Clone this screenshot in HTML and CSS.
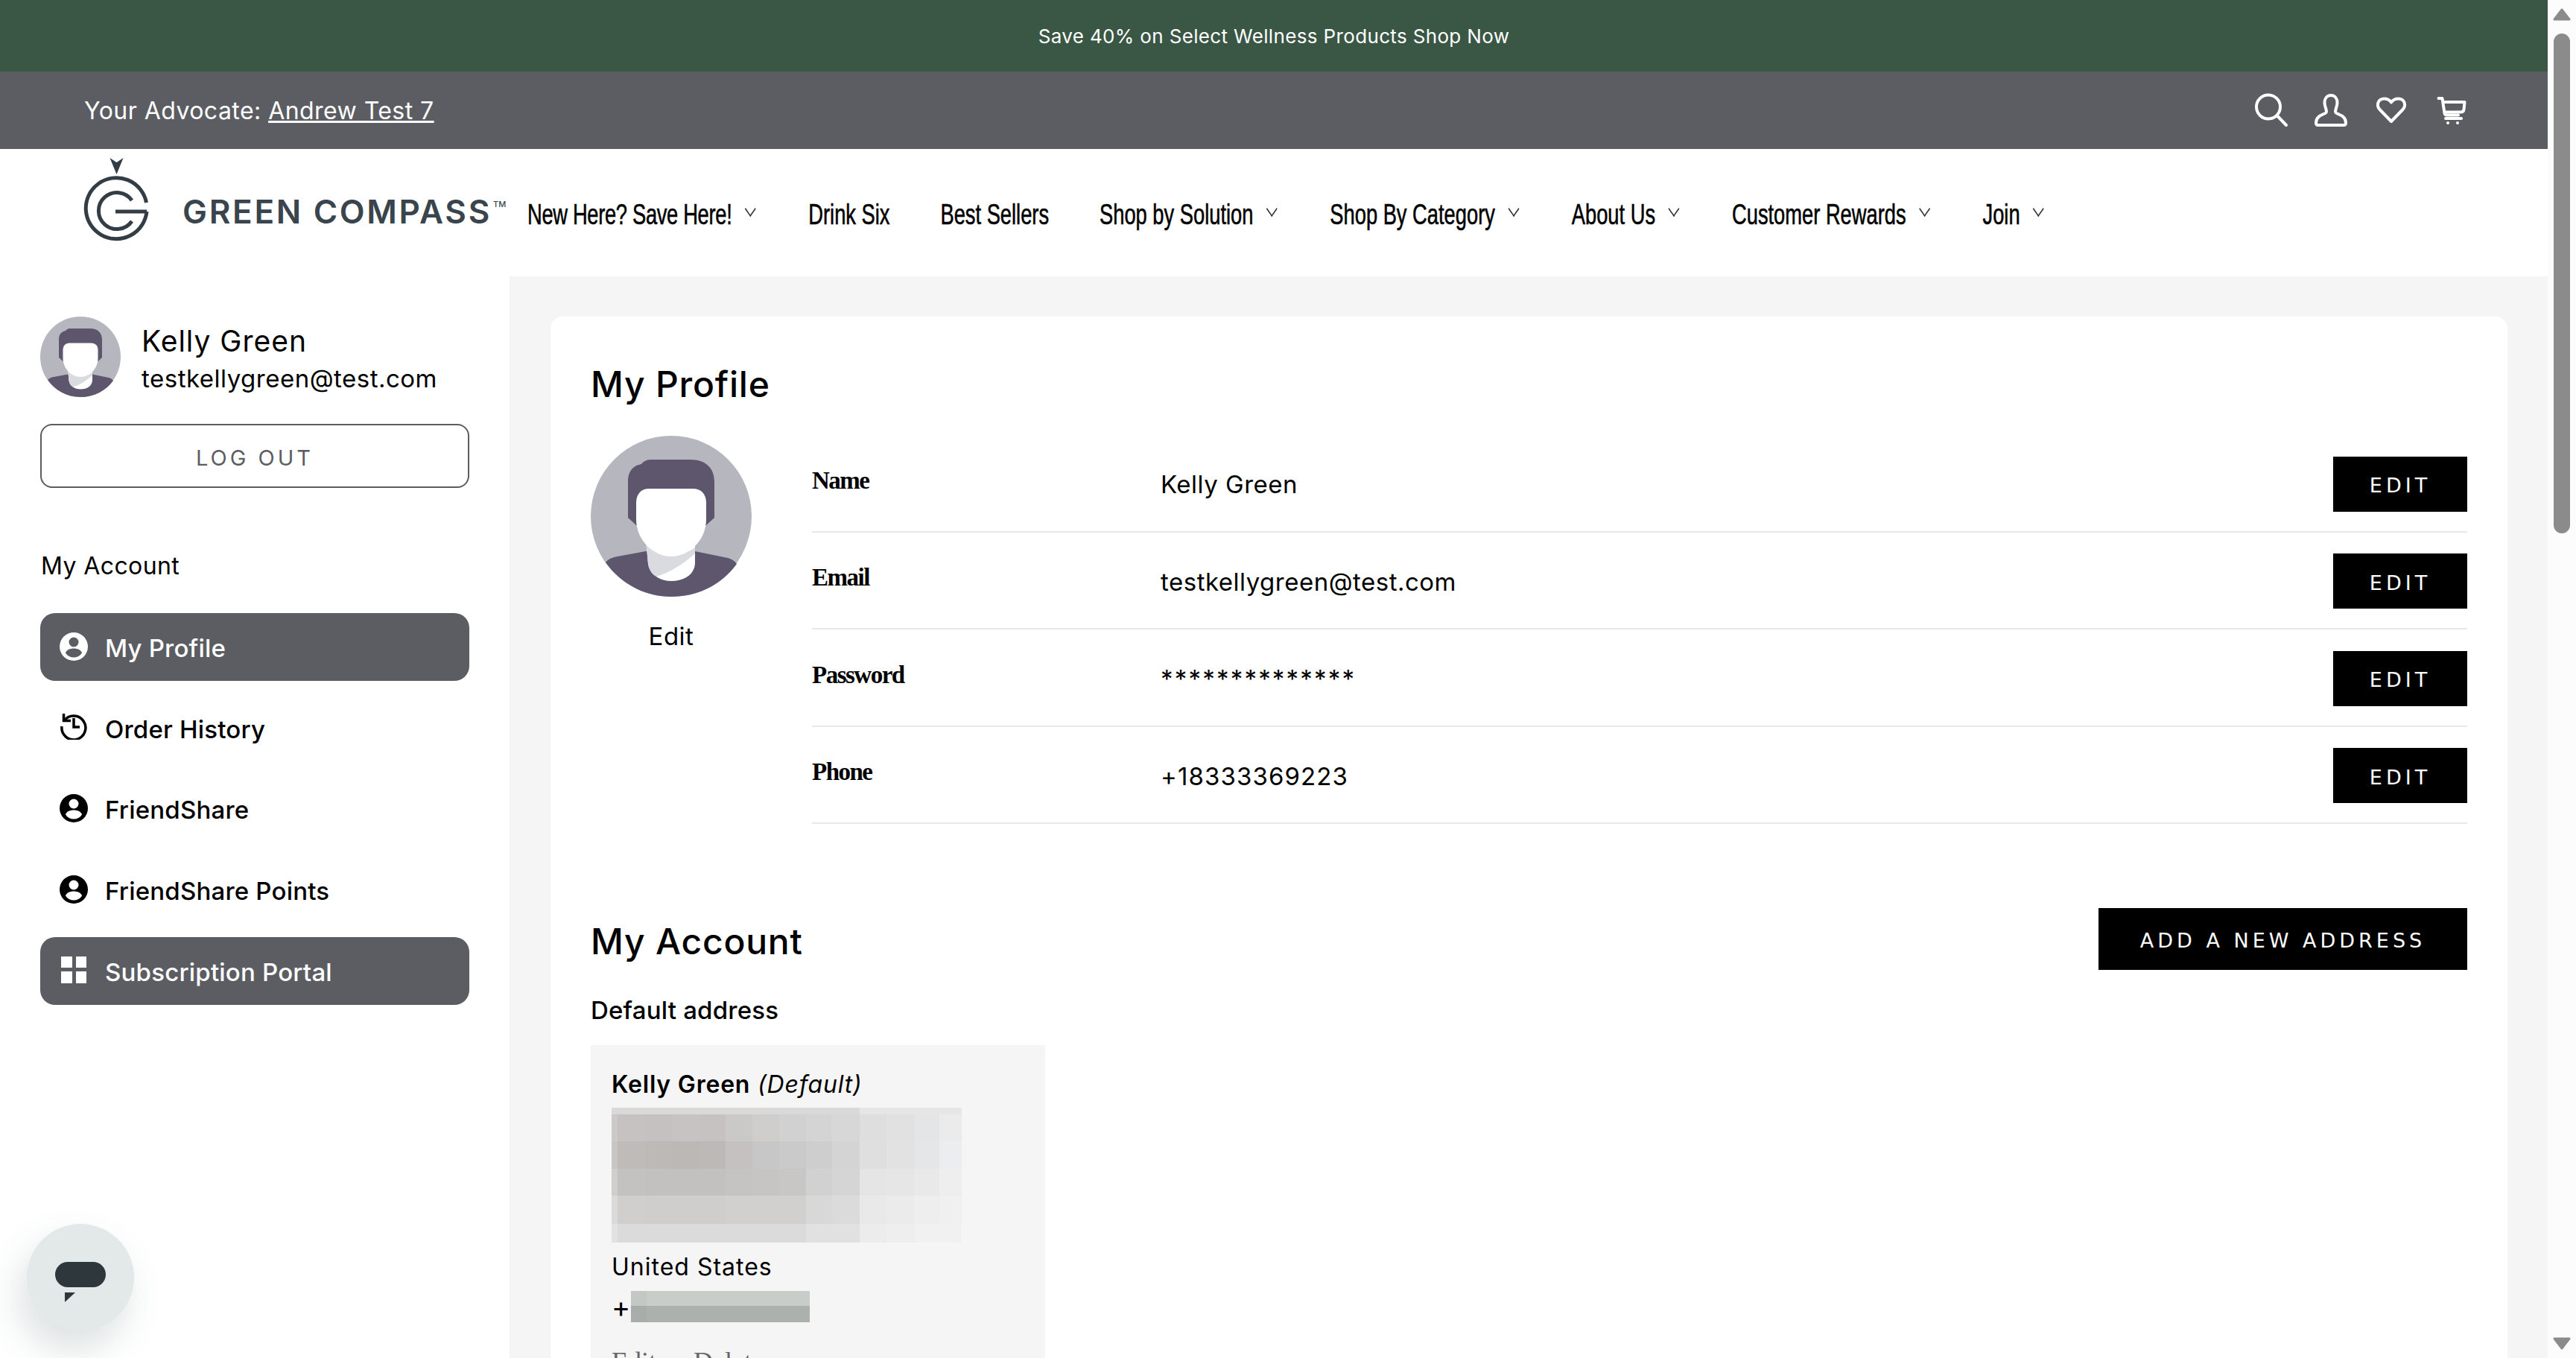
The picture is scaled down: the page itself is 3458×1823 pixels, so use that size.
FILE: index.html
```html
<!DOCTYPE html>
<html lang="en">
<head>
  <meta charset="UTF-8">
  <title>My Profile</title>
  <link rel="stylesheet" href="styles.css">
</head>
<body>

  <svg class="defs" width="0" height="0">
    <symbol id="avatar" viewBox="0 0 216 216">
      <circle cx="108" cy="108" r="108" fill="#b6b7be"/>
      <path d="M50 110V62C50 46 58 40 68 38C72 33 76 32 82 32H134C155 32 166 44 166 62V110L155 120H61Z" fill="#5d566c"/>
      <path d="M20 170C24 165 30 163 36 162L74 155L140 155L184 164C190 166 193 168 196 172C176 200 144 216 108 216C72 216 40 198 20 170Z" fill="#5d566c"/>
      <path d="M74 140H140V170C140 186 126 195 108 195C92 195 80 186 77 172Z" fill="#fff"/>
      <path d="M74 140C84 158 120 165 140 150V158C124 172 108 183 88 189C82 186 78 180 77 172Z" fill="#d9dbe1"/>
      <path d="M61 90C61 78 68 71 78 71H137C148 71 155 78 155 90V112C155 140 132 162 108 162C84 162 61 140 61 112Z" fill="#fff"/>
    </symbol>
    <symbol id="user-circle" viewBox="0 0 38 38">
      <path fill-rule="evenodd" d="M19 0a19 19 0 1 1 0 38a19 19 0 1 1 0-38ZM19 6.500a6.500 6.500 0 1 0 0 13a6.500 6.500 0 1 0 0-13ZM19 21.500c-5 0-10 2-11 6c2.500 4 6.500 6 11 6s8.500-2 11-6c-1-4-6-6-11-6Z"/>
    </symbol>
  </svg>

  <div class="page">
    <div class="promo">Save 40% on Select Wellness Products Shop Now</div>

    <div class="topbar">
      <div class="advocate">Your Advocate: <a href="#">Andrew Test 7</a></div>
      <div class="top-icons">
        <svg viewBox="0 0 48 48"><circle cx="21" cy="19.500" r="16"/><path d="M33 31.500L45 44"/></svg>
        <svg viewBox="0 0 48 48"><path d="M24 4C18 4 15.500 9 15.500 14C15.500 19 18 22 18 26C18 30 4 29 4 41C4 43 5 44 7 44H41C43 44 44 43 44 41C44 29 30 30 30 26C30 22 32.500 19 32.500 14C32.500 9 30 4 24 4Z"/></svg>
        <svg viewBox="0 0 48 48"><path d="M24 39L8.500 23C3.500 17.500 6 8.500 14.500 8.500C19 8.500 22 10.500 24 13.500C26 10.500 29 8.500 33.500 8.500C42 8.500 44.500 17.500 39.500 23Z"/></svg>
        <svg viewBox="0 0 48 48"><path d="M6.500 8H11.500L14.500 28C14.800 30 16 30.500 18 30.500H33"/><path d="M13 13H41.500L40.500 23C40.200 25.500 39 26.500 36 26.500H16"/><path d="M16 35H37"/><circle class="wheel" cx="19" cy="41" r="2"/><circle class="wheel" cx="32" cy="41" r="2"/></svg>
      </div>
    </div>

    <header class="site-header">
      <a class="logo" href="#">
        <svg class="logo-mark" viewBox="0 0 90 120">
          <path class="logo-arrow" d="M36.500 2L45.500 8L54.500 2L45.500 24Z"/>
          <path class="logo-line" d="M85.500 62A41 41 0 1 0 86 74"/>
          <path class="logo-line" d="M66 59A24.500 24.500 0 1 0 66 87"/>
          <path class="logo-line" d="M44 74H86"/>
        </svg>
        <span class="logo-name">GREEN COMPASS<sup>TM</sup></span>
      </a>
      <nav class="main-nav">
        <a href="#" class="has-sub">New Here? Save Here!</a>
        <a href="#">Drink Six</a>
        <a href="#">Best Sellers</a>
        <a href="#" class="has-sub">Shop by Solution</a>
        <a href="#" class="has-sub">Shop By Category</a>
        <a href="#" class="has-sub">About Us</a>
        <a href="#" class="has-sub">Customer Rewards</a>
        <a href="#" class="has-sub">Join</a>
      </nav>
    </header>

    <div class="account">
      <aside class="sidebar">
        <div class="user">
          <svg class="user-pic"><use href="#avatar"/></svg>
          <div class="user-text">
            <div class="user-name">Kelly Green</div>
            <div class="user-email">testkellygreen@test.com</div>
          </div>
        </div>
        <a class="logout" href="#"><span>LOG OUT</span></a>
        <div class="side-title">My Account</div>
        <ul class="side-menu">
          <li class="active"><svg class="side-icon"><use href="#user-circle"/></svg>My Profile</li>
          <li>
            <svg class="side-icon history" viewBox="0 0 38 38"><path d="M5.500 3V12.500H15"/><path d="M6 12.500A16 16 0 1 1 3 20"/><path d="M19 9V21H27"/></svg>
            Order History
          </li>
          <li><svg class="side-icon"><use href="#user-circle"/></svg>FriendShare</li>
          <li><svg class="side-icon"><use href="#user-circle"/></svg>FriendShare Points</li>
          <li class="active">
            <span class="grid-icon"><i></i><i></i><i></i><i></i></span>
            Subscription Portal
          </li>
        </ul>
      </aside>

      <main class="content">
        <div class="card">
          <h1>My Profile</h1>
          <section class="profile">
            <div class="profile-pic">
              <svg><use href="#avatar"/></svg>
              <a href="#">Edit</a>
            </div>
            <div class="fields">
              <div class="field">
                <div class="field-label">Name</div>
                <div class="field-value">Kelly Green</div>
                <a class="btn-edit" href="#">EDIT</a>
              </div>
              <div class="field">
                <div class="field-label">Email</div>
                <div class="field-value">testkellygreen@test.com</div>
                <a class="btn-edit" href="#">EDIT</a>
              </div>
              <div class="field">
                <div class="field-label">Password</div>
                <div class="field-value secret">**************</div>
                <a class="btn-edit" href="#">EDIT</a>
              </div>
              <div class="field">
                <div class="field-label">Phone</div>
                <div class="field-value phone">+18333369223</div>
                <a class="btn-edit" href="#">EDIT</a>
              </div>
            </div>
          </section>

          <section class="addresses">
            <div class="addresses-head">
              <h2>My Account</h2>
              <a class="btn-add" href="#">ADD A NEW ADDRESS</a>
            </div>
            <h3>Default address</h3>
            <div class="address-card">
              <div class="address-name"><b>Kelly Green</b> <em>(Default)</em></div>
              <!-- redacted street address -->
              <svg class="redact-street" viewBox="0 0 470 181" shape-rendering="crispEdges">
                <rect width="470" height="181" fill="#dcdbdb"/>
                <rect x="0" y="0" width="333" height="9" fill="#dad9d9"/>
                <rect x="333" y="0" width="137" height="9" fill="#e6e6e6"/>
                <rect x="0" y="9" width="8" height="36" fill="#ccc9c8"/><rect x="8" y="9" width="37" height="36" fill="#c5c2c1"/><rect x="45" y="9" width="36" height="36" fill="#c4c1c0"/><rect x="81" y="9" width="36" height="36" fill="#c6c3c2"/><rect x="117" y="9" width="36" height="36" fill="#c5c2c1"/><rect x="153" y="9" width="36" height="36" fill="#cbc9c8"/><rect x="189" y="9" width="36" height="36" fill="#cfcecd"/><rect x="225" y="9" width="36" height="36" fill="#d2d1d1"/><rect x="261" y="9" width="35" height="36" fill="#d4d4d4"/><rect x="296" y="9" width="37" height="36" fill="#d7d7d7"/><rect x="333" y="9" width="36" height="36" fill="#dedede"/><rect x="369" y="9" width="38" height="36" fill="#e1e1e1"/><rect x="407" y="9" width="33" height="36" fill="#e4e5e6"/><rect x="440" y="9" width="30" height="36" fill="#ebebec"/>
                <rect x="0" y="45" width="8" height="37" fill="#c9c5c4"/><rect x="8" y="45" width="37" height="37" fill="#bfbbb9"/><rect x="45" y="45" width="36" height="37" fill="#bdb9b7"/><rect x="81" y="45" width="36" height="37" fill="#bcb8b6"/><rect x="117" y="45" width="36" height="37" fill="#bdb9b7"/><rect x="153" y="45" width="36" height="37" fill="#c4c1c0"/><rect x="189" y="45" width="36" height="37" fill="#c8c7c8"/><rect x="225" y="45" width="36" height="37" fill="#cbcacb"/><rect x="261" y="45" width="35" height="37" fill="#cfcecf"/><rect x="296" y="45" width="37" height="37" fill="#d5d4d4"/><rect x="333" y="45" width="36" height="37" fill="#dfdfdf"/><rect x="369" y="45" width="38" height="37" fill="#e2e2e2"/><rect x="407" y="45" width="33" height="37" fill="#e5e6e7"/><rect x="440" y="45" width="30" height="37" fill="#ecedee"/>
                <rect x="0" y="82" width="8" height="36" fill="#cfcecd"/><rect x="8" y="82" width="37" height="36" fill="#c4c2c0"/><rect x="45" y="82" width="36" height="36" fill="#c3c1bf"/><rect x="81" y="82" width="36" height="36" fill="#c3c1bf"/><rect x="117" y="82" width="36" height="36" fill="#c3c1bf"/><rect x="153" y="82" width="36" height="36" fill="#c6c4c3"/><rect x="189" y="82" width="36" height="36" fill="#c7c5c4"/><rect x="225" y="82" width="36" height="36" fill="#c9c7c6"/><rect x="261" y="82" width="35" height="36" fill="#d2d1d1"/><rect x="296" y="82" width="37" height="36" fill="#d6d5d5"/><rect x="333" y="82" width="36" height="36" fill="#e5e5e5"/><rect x="369" y="82" width="38" height="36" fill="#e7e6e6"/><rect x="407" y="82" width="33" height="36" fill="#e9e9e9"/><rect x="440" y="82" width="30" height="36" fill="#eeeeee"/>
                <rect x="0" y="118" width="8" height="38" fill="#dadada"/><rect x="8" y="118" width="37" height="38" fill="#d0cfce"/><rect x="45" y="118" width="108" height="38" fill="#cfcecd"/><rect x="153" y="118" width="108" height="38" fill="#d1d0cf"/><rect x="261" y="118" width="35" height="38" fill="#d8d8d8"/><rect x="296" y="118" width="37" height="38" fill="#dbdbdb"/><rect x="333" y="118" width="36" height="38" fill="#e9e9e9"/><rect x="369" y="118" width="38" height="38" fill="#ebebeb"/><rect x="407" y="118" width="33" height="38" fill="#eeeeee"/><rect x="440" y="118" width="30" height="38" fill="#f0f0f0"/>
                <rect x="0" y="156" width="8" height="25" fill="#e2e2e2"/><rect x="8" y="156" width="253" height="25" fill="#dbdbdb"/><rect x="261" y="156" width="72" height="25" fill="#e1e1e1"/><rect x="333" y="156" width="36" height="25" fill="#ececec"/><rect x="369" y="156" width="38" height="25" fill="#eeeeee"/><rect x="407" y="156" width="63" height="25" fill="#f1f1f1"/>
              </svg>
              <div class="address-line">United States</div>
              <div class="address-phone">
                <span>+</span>
                <svg class="redact-phone" viewBox="0 0 240 42" shape-rendering="crispEdges">
                  <rect width="240" height="20" fill="#c9cdca"/>
                  <rect y="20" width="240" height="22" fill="#adb1ae"/>
                  <rect x="0" y="0" width="21" height="20" fill="#c4c8c5"/>
                  <rect x="0" y="20" width="21" height="22" fill="#a9adaa"/>
                </svg>
              </div>
              <div class="address-actions"><a href="#">Edit</a><a href="#">Delete</a></div>
            </div>
          </section>
        </div>
      </main>
    </div>
  </div>

  <div class="scrollbar">
    <svg class="scroll-arrow" viewBox="0 0 24 18"><path d="M12 2L22 15H2Z"/></svg>
    <div class="scroll-thumb"></div>
    <svg class="scroll-arrow" viewBox="0 0 24 18"><path d="M2 3H22L12 16Z"/></svg>
  </div>

  <div class="chat-btn">
    <div class="chat-bubble"></div>
    <div class="chat-tail"></div>
  </div>

</body>
</html>
```

FILE: styles.css
```css
* {
  box-sizing: border-box;
}

html, body {
  height: 100%;
}

body {
  margin: 0;
  display: flex;
  overflow: hidden;
  font-family: Inter, "Liberation Sans", sans-serif;
  color: #000;
  background-color: #fff;
}

a {
  color: inherit;
  text-decoration: none;
}

.defs {
  position: absolute;
}

.page {
  flex: 1;
  min-width: 0;
  height: 100%;
  overflow: hidden;
  display: flex;
  flex-direction: column;
}

/* Top bars */
.promo {
  height: 96px;
  flex: none;
  background-color: #3a5645;
  color: #fff;
  font-size: 26px;
  letter-spacing: 0.35px;
  display: flex;
  align-items: center;
  justify-content: center;
}

.topbar {
  height: 104px;
  flex: none;
  background-color: #5c5d63;
  color: #fff;
  padding: 0 105px 0 113px;
  display: flex;
  align-items: center;
  justify-content: space-between;
}

.advocate {
  font-size: 32px;
  letter-spacing: 0.45px;
}

.advocate a {
  text-decoration: underline;
}

.top-icons {
  display: flex;
  gap: 33px;
}

.top-icons svg {
  width: 48px;
  height: 48px;
  fill: none;
  stroke: #fff;
  stroke-width: 4;
  stroke-linecap: round;
  stroke-linejoin: round;
}

.top-icons .wheel {
  fill: #fff;
  stroke: none;
}

/* Header */
.site-header {
  height: 171px;
  flex: none;
  padding-left: 111px;
  display: flex;
  background-color: #fff;
}

.logo {
  width: 597px;
  flex: none;
  display: flex;
}

.logo-mark {
  width: 90px;
  height: 120px;
  margin-top: 10px;
}

.logo-arrow {
  fill: #333d45;
}

.logo-line {
  fill: none;
  stroke: #333d45;
  stroke-width: 5;
}

.logo-name {
  margin: 57px 0 0 44px;
  font-size: 44px;
  font-weight: 600;
  letter-spacing: 2.700px;
  color: #3a444c;
  white-space: nowrap;
}

.logo-name sup {
  font-size: 11px;
  font-weight: 500;
  letter-spacing: 0;
  vertical-align: 22px;
  line-height: 0;
  margin-left: 2px;
}

/* the site's nav font is a tall condensed face, none is installed so squeeze Liberation Sans */
.main-nav {
  flex: none;
  display: flex;
  align-items: center;
  gap: 97px;
  height: 164px;
  margin-top: 6px;
  font-family: "Liberation Sans", sans-serif;
  font-size: 39px;
  -webkit-text-stroke: 0.6px #000;
  white-space: nowrap;
  transform: scaleX(0.7);
  transform-origin: left center;
}

.main-nav a:first-child {
  letter-spacing: -0.450px;
}

.has-sub {
  display: flex;
  align-items: center;
  gap: 26px;
}

.has-sub::after {
  content: "";
  width: 13px;
  height: 13px;
  margin: -16px 7px 0 2px;
  border-right: 2px solid #333;
  border-bottom: 2px solid #333;
  -webkit-text-stroke: 0;
  transform: rotate(45deg);
}

/* Account layout */
.account {
  flex: 1;
  min-height: 0;
  display: flex;
}

.sidebar {
  width: 684px;
  flex: none;
  padding: 54px 54px 0;
}

.user {
  display: flex;
  align-items: center;
  gap: 28px;
}

.user-pic {
  width: 108px;
  height: 108px;
  flex: none;
}

.user-text {
  padding-top: 8px;
}

.user-name {
  font-size: 39px;
  letter-spacing: 1px;
  line-height: 50px;
}

.user-email {
  font-size: 33px;
  letter-spacing: 0.5px;
  line-height: 50px;
}

.logout {
  display: flex;
  align-items: center;
  justify-content: center;
  height: 86px;
  margin-top: 36px;
  border: 2px solid #5c5d63;
  border-radius: 16px;
  color: #5c5d63;
  font-size: 29px;
  letter-spacing: 4px;
}

.logout span {
  padding-top: 4px;
}

.side-title {
  margin-top: 84px;
  font-size: 32px;
  letter-spacing: 0.4px;
  line-height: 42px;
  padding-left: 1px;
}

.side-menu {
  list-style: none;
  margin: 42px 0 0;
  padding: 0;
  display: flex;
  flex-direction: column;
  gap: 18px;
}

.side-menu li {
  height: 90.750px;
  padding: 3px 0 0 26px;
  border-radius: 20px;
  display: flex;
  align-items: center;
  gap: 23px;
  font-size: 33px;
  font-weight: 500;
  letter-spacing: 0.2px;
}

.side-menu li.active {
  background-color: #5c5d63;
  color: #fff;
}

.side-icon {
  width: 38px;
  height: 38px;
  flex: none;
  margin-top: -4px;
  fill: currentColor;
}

.side-icon.history {
  margin-top: -10px;
  fill: none;
  stroke: currentColor;
  stroke-width: 3.500;
}

.grid-icon {
  width: 38px;
  height: 38px;
  flex: none;
  margin-top: -6px;
  padding: 1px 2px;
  display: grid;
  grid-template-columns: 1fr 1fr;
  gap: 5px;
}

.grid-icon i {
  background-color: #fff;
}

/* Main card */
.content {
  flex: 1;
  min-width: 0;
  background-color: #f5f5f5;
  padding: 54px 54px 0 55px;
}

.card {
  background-color: #fff;
  border-radius: 16px 16px 0 0;
  padding: 54px 54px 40px;
  height: 1500px;
}

h1, h2 {
  margin: 0;
  font-size: 48px;
  font-weight: 500;
  letter-spacing: 0.8px;
  line-height: 74px;
}

.profile {
  display: flex;
  gap: 81px;
  margin-top: 31px;
  align-items: flex-start;
}

.profile-pic {
  width: 216px;
  flex: none;
  margin-top: 1px;
  display: flex;
  flex-direction: column;
  align-items: center;
  font-size: 33px;
  letter-spacing: 0.5px;
}

.profile-pic svg {
  width: 216px;
  height: 216px;
}

.profile-pic a {
  margin-top: 33px;
}

.fields {
  flex: 1;
  min-width: 0;
}

.field {
  height: 130.500px;
  border-bottom: 2px solid #e8e8e8;
  display: flex;
  align-items: center;
}

.field-label {
  width: 468px;
  flex: none;
  margin-top: -6px;
  font-family: "Liberation Serif", serif;
  font-size: 33px;
  font-weight: 700;
  letter-spacing: -1.500px;
}

.field-value {
  flex: 1;
  font-size: 33px;
  letter-spacing: 0.5px;
  margin-top: 4px;
}

.field-value.secret {
  letter-spacing: 2.200px;
}

.field-value.phone {
  letter-spacing: 1.100px;
}

.btn-edit,
.btn-add {
  flex: none;
  background-color: #000;
  color: #fff;
  display: flex;
  align-items: center;
  justify-content: center;
  padding-top: 4px;
  font-family: "DejaVu Sans", sans-serif;
  font-size: 27px;
  letter-spacing: 5px;
}

.btn-edit {
  width: 180px;
  height: 74px;
  margin-top: 3px;
}

.addresses {
  margin-top: 113px;
}

.addresses-head {
  display: flex;
  align-items: center;
  justify-content: space-between;
}

.btn-add {
  width: 495px;
  height: 83px;
}

.addresses-head h2 {
  margin-top: 7px;
}

h3 {
  margin: 32px 0 0;
  font-size: 33px;
  font-weight: 500;
  letter-spacing: 0.2px;
  line-height: 44px;
}

.address-card {
  width: 610px;
  height: 500px;
  margin-top: 25px;
  padding: 32px 28px 0;
  background-color: #f5f5f5;
  font-size: 32px;
  letter-spacing: 0.8px;
}

.address-name {
  line-height: 42px;
}

.address-name b {
  font-weight: 600;
}

.redact-street {
  display: block;
  width: 470px;
  height: 181px;
  margin-top: 10px;
}

.address-line {
  margin-top: 12px;
  line-height: 42px;
  letter-spacing: 1px;
}

.address-phone {
  display: flex;
  align-items: center;
  margin-top: 11px;
  height: 42px;
}

.address-phone span {
  font-size: 38px;
}

.redact-phone {
  width: 240px;
  height: 42px;
}

.address-actions {
  display: flex;
  gap: 50px;
  margin-top: 32px;
  color: #666;
  font-family: "Liberation Serif", serif;
  font-size: 36px;
  letter-spacing: 0;
}

/* Fake browser scrollbar */
.scrollbar {
  width: 38px;
  flex: none;
  background-color: #fcfcfc;
  padding: 11px 7px;
  display: flex;
  flex-direction: column;
  align-items: center;
}

.scroll-arrow {
  width: 24px;
  height: 18px;
  flex: none;
  fill: #8b8b8b;
  stroke: #8b8b8b;
  stroke-width: 3;
  stroke-linejoin: round;
}

.scroll-thumb {
  width: 22px;
  height: 671px;
  margin: 16px 0 auto;
  background-color: #8b8b8b;
  border-radius: 11px;
}

/* Chat button */
.chat-btn {
  position: fixed;
  left: 36px;
  top: 1643px;
  width: 144px;
  height: 144px;
  border-radius: 50%;
  background-color: #e3e8e8;
  box-shadow: -10px 25px 50px rgba(60, 90, 90, 0.18);
}

.chat-bubble {
  position: absolute;
  left: 38px;
  top: 51px;
  width: 68px;
  height: 34px;
  border-radius: 17px;
  background-color: #2e373b;
}

.chat-tail {
  position: absolute;
  left: 51px;
  top: 92px;
  width: 14px;
  height: 13px;
  background-color: #2e373b;
  clip-path: polygon(0 0, 100% 0, 0 100%);
}
```
